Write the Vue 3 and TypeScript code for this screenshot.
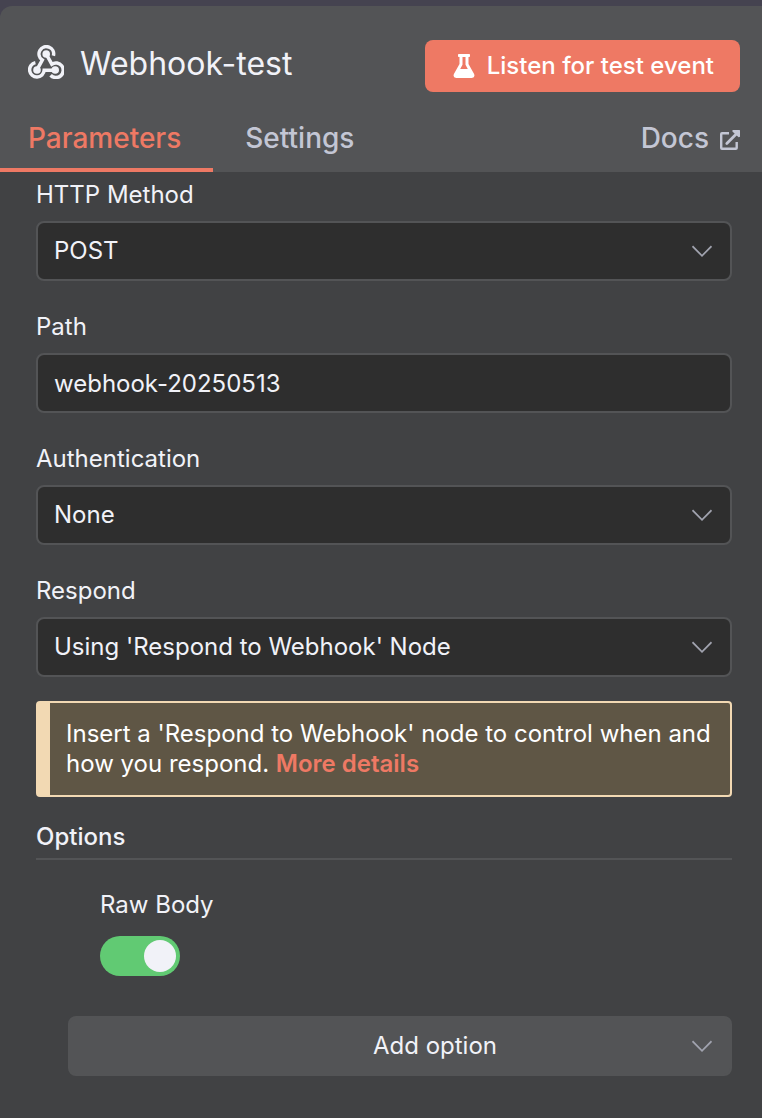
<script setup lang="ts">
import { ref } from 'vue'

interface SelectField {
  kind: 'select'
  id: string
  label: string
  options: string[]
}
interface TextField {
  kind: 'text'
  id: string
  label: string
}

const fields: (SelectField | TextField)[] = [
  { kind: 'select', id: 'method', label: 'HTTP Method', options: ['POST'] },
  { kind: 'text', id: 'path', label: 'Path' },
  { kind: 'select', id: 'auth', label: 'Authentication', options: ['None'] },
  { kind: 'select', id: 'respond', label: 'Respond', options: ["Using 'Respond to Webhook' Node"] },
]

const values = ref<Record<string, string>>({
  method: 'POST',
  path: 'webhook-20250513',
  auth: 'None',
  respond: "Using 'Respond to Webhook' Node",
})
const rawBody = ref(true)
</script>

<template>
  <main class="panel">
    <header class="header">
      <div class="title-row">
        <svg class="webhook" viewBox="0 0 36 34" aria-hidden="true">
          <g fill="none" stroke="currentColor" stroke-width="3.5">
            <path d="M25.4 10.8 A7.3 7.3 0 1 0 14.3 15 L9.3 24.2" />
            <path d="M7.4 17.6 A7.3 7.3 0 1 0 16.2 25.2 H27" />
            <path d="M18.2 9 L23.8 19.2 A7.3 7.3 0 1 1 22.6 30.2" />
          </g>
          <g fill="currentColor">
            <circle cx="18.2" cy="9" r="3.8" />
            <circle cx="9" cy="25" r="3.8" />
            <circle cx="27.2" cy="25" r="3.8" />
          </g>
        </svg>
        <h1>Webhook-test</h1>
        <button type="button" class="listen">
          <svg class="flask" viewBox="0 0 22 24" aria-hidden="true">
            <path
              fill="currentColor"
              fill-rule="evenodd"
              d="M5.8 0 H16.2 Q17 0 17 .8 V2.2 Q17 3 16.2 3 H15.5 V10 L21.1 20 Q22.4 24 18.8 24 H3.2 Q-.4 24 .9 20 L6.5 10 V3 H5.8 Q5 3 5 2.2 V.8 Q5 0 5.8 0 Z M9.5 3 V10.8 L7.2 15 H14.8 L12.5 10.8 V3 Z"
            />
          </svg>
          <span>Listen for test event</span>
        </button>
      </div>
      <nav class="tabs">
        <a href="#parameters" class="tab active" aria-current="page">Parameters</a>
        <a href="#settings" class="tab">Settings</a>
        <a href="#docs" class="docs">
          <span>Docs</span>
          <svg viewBox="0 0 20 20" aria-hidden="true">
            <path
              fill="none"
              stroke="currentColor"
              stroke-width="2.4"
              stroke-linejoin="round"
              d="M9 3.2 H2 Q1.2 3.2 1.2 4.1 V18 Q1.2 18.8 2 18.8 H15.8 Q16.7 18.8 16.7 18 V12"
            />
            <path fill="none" stroke="currentColor" stroke-width="2.8" stroke-linecap="round" d="M6.8 13.4 L16.5 3.7" />
            <path fill="currentColor" d="M12.6 0 H19.4 Q20 0 20 .6 V6.8 L18.6 7.2 L12.4 1.4 Z" />
          </svg>
        </a>
      </nav>
    </header>

    <form class="content" @submit.prevent>
      <div class="fields">
        <div v-for="field in fields" :key="field.id" class="field">
          <label :for="field.id">{{ field.label }}</label>
          <input v-if="field.kind === 'text'" :id="field.id" v-model="values[field.id]" class="control" type="text" spellcheck="false" />
          <div v-else class="select-box">
            <select :id="field.id" v-model="values[field.id]" class="control">
              <option v-for="option in field.options" :key="option">{{ option }}</option>
            </select>
            <svg class="chevron" viewBox="0 0 20 12" aria-hidden="true"><path d="M0.5 1.2 L10 10.8 L19.5 1.2" /></svg>
          </div>
        </div>
      </div>

      <p class="notice">
        Insert a 'Respond to Webhook' node to control when and how you respond.
        <a href="#details">More details</a>
      </p>

      <section>
        <h2>Options</h2>
        <div class="options">
          <div class="option">
            <label for="raw-body">Raw Body</label>
            <input id="raw-body" v-model="rawBody" class="switch" type="checkbox" role="switch" />
          </div>
          <div class="select-box">
            <select class="control add" aria-label="Add option">
              <option>Add option</option>
            </select>
            <svg class="chevron" viewBox="0 0 20 12" aria-hidden="true"><path d="M0.5 1.2 L10 10.8 L19.5 1.2" /></svg>
          </div>
        </div>
      </section>
    </form>
  </main>
</template>

<style>
body {
  margin: 0;
  background: #414244;
}
html {
  background: #414244;
}
</style>

<style scoped>
.panel {
  border-top: 6px solid #454350;
  background: #454350;
  color: #f1f2f8;
  font: 24px/32px Inter, sans-serif;
}
.panel * {
  box-sizing: border-box;
}
.header {
  border-radius: 12px 0 0 0;
  background: #535456;
}
.title-row {
  display: flex;
  align-items: flex-start;
  padding: 34px 22px 0 28px;
}
.webhook {
  width: 36px;
  height: 34px;
  margin-top: 5px;
}
h1 {
  flex: 1;
  margin: 0 16px;
  font-size: 32px;
  font-weight: 400;
  line-height: 48px;
}
.listen {
  display: flex;
  align-items: center;
  gap: 12px;
  height: 52px;
  padding: 0 26px 0 28px;
  border: 0;
  border-radius: 8px;
  background: #ee7964;
  color: #fff;
  font: inherit;
  font-weight: 500;
}
.flask {
  width: 22px;
  height: 24px;
}
.tabs {
  display: flex;
  align-items: flex-start;
  height: 80px;
  padding-top: 24px;
  font-size: 28px;
  font-weight: 500;
  line-height: 44px;
}
.tab,
.docs {
  color: #c3c6d4;
  text-decoration: none;
}
.tab {
  height: 56px;
  padding: 0 32px;
}
.tab.active {
  padding-left: 28px;
  border-bottom: 4px solid #ee7964;
  color: #ee7964;
}
.docs {
  display: flex;
  align-items: center;
  gap: 11px;
  margin-left: auto;
  padding-right: 22px;
}
.docs svg {
  width: 20px;
  height: 20px;
  margin-top: 4px;
}
.content {
  padding: 7px 30px 42px 36px;
  background: #414244;
}
.fields {
  display: grid;
  gap: 30px;
}
.field {
  display: grid;
  gap: 10px;
}
.control {
  appearance: none;
  width: 100%;
  height: 60px;
  margin: 0;
  padding: 0 48px 0 16px;
  border: 2px solid #535456;
  border-radius: 8px;
  outline: 0;
  background: #2e2e2e;
  color: #f1f2f8;
  font: inherit;
}
.select-box {
  display: grid;
  align-items: center;
}
.select-box > * {
  grid-area: 1 / 1;
}
.chevron {
  justify-self: end;
  width: 20px;
  height: 12px;
  margin-right: 20px;
  pointer-events: none;
}
.chevron path {
  fill: none;
  stroke: #a1a3af;
  stroke-width: 1.7;
}
.notice {
  margin: 24px 0;
  padding: 16px;
  border: 2px solid #f2d9b3;
  border-left-width: 14px;
  border-radius: 4px;
  background: #5f5645;
  color: #fff;
  line-height: 30px;
}
.notice a {
  color: #ee7964;
  font-weight: 600;
  text-decoration: none;
}
h2 {
  margin: 0;
  padding-bottom: 5px;
  border-bottom: 2px solid #535456;
  font-size: 24px;
  font-weight: 500;
  line-height: 32px;
}
.options {
  display: grid;
  gap: 40px;
  padding: 29px 0 0 32px;
}
.option {
  display: grid;
  gap: 15px;
  padding-left: 32px;
}
.switch {
  appearance: none;
  display: flex;
  width: 80px;
  height: 40px;
  margin: 0;
  padding: 4px;
  border-radius: 20px;
  background: #7b7d85;
}
.switch::before {
  content: '';
  width: 32px;
  height: 32px;
  border-radius: 50%;
  background: #f1f2f8;
}
.switch:checked {
  justify-content: flex-end;
  background: #61ca73;
}
.add {
  padding: 0 16px 0 86px;
  border-color: #535456;
  background: #535456;
  text-align-last: center;
}
</style>
